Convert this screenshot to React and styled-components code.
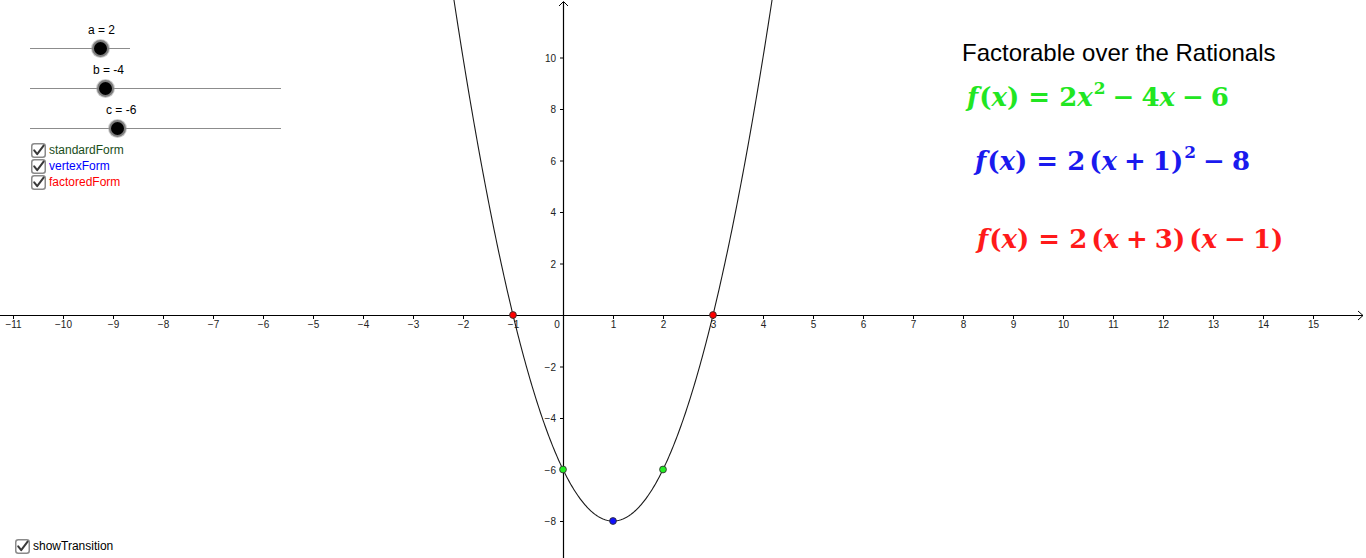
import React from "react";
import styled, { createGlobalStyle } from "styled-components";

const GlobalStyle = createGlobalStyle`
  html, body { margin: 0; padding: 0; background: #fff; }
  body { font-family: "Liberation Sans", Arial, sans-serif; }
`;

const W = 1366;
const H = 558;
const OX = 563;
const OY = 315;
const UX = 50;
const UY = 25.75;
const px = (x) => OX + x * UX;
const py = (y) => OY - y * UY;

const Canvas = styled.div`
  position: relative;
  width: ${W}px;
  height: ${H}px;
  overflow: hidden;
  background: #fff;
`;

const GraphSvg = styled.svg`
  display: block;
  width: ${W}px;
  height: ${H}px;
`;

const TickText = styled.text`
  font-family: "Liberation Sans", Arial, sans-serif;
  font-size: 10px;
  fill: #222;
`;

const Controls = styled.div`
  position: absolute;
  left: 30px;
  top: 21px;
  display: flex;
  flex-direction: column;
`;

const SliderBlock = styled.div`
  height: 40px;
  display: flex;
  flex-direction: column;
`;

const SliderLabel = styled.div`
  height: 18px;
  line-height: 18px;
  font-size: 12px;
  color: #000;
  padding-left: ${(p) => p.$offset}px;
  white-space: nowrap;
`;

const Track = styled.div`
  position: relative;
  width: ${(p) => p.$width}px;
  height: 1px;
  margin-top: 9px;
  background: #8c8c8c;
`;

const Knob = styled.div`
  position: absolute;
  top: -8px;
  left: ${(p) => p.$pos - 8.5}px;
  width: 13px;
  height: 13px;
  border-radius: 50%;
  background: #000;
  border: 2px solid #7d7d7d;
  box-shadow: 0 0 0 1px rgba(150, 150, 150, 0.5);
`;

const CheckList = styled.div`
  display: flex;
  flex-direction: column;
  margin-top: 1px;
  margin-left: 1px;
`;

const CheckRow = styled.div`
  display: flex;
  align-items: center;
  gap: 3px;
  height: 16px;
  font-size: 12px;
  color: ${(p) => p.$color};
  white-space: nowrap;
`;

const BottomCheck = styled.div`
  position: absolute;
  left: 15px;
  top: 538px;
`;

const FormulaPanel = styled.div`
  position: absolute;
  left: 962px;
  top: 39px;
  display: flex;
  flex-direction: column;
`;

const Title = styled.div`
  font-family: "Liberation Sans", Arial, sans-serif;
  font-size: 24px;
  line-height: 28px;
  color: #000;
  white-space: nowrap;
`;

const Formula = styled.div`
  font-family: "DejaVu Serif", "Liberation Serif", serif;
  font-weight: bold;
  font-size: 26px;
  line-height: 32px;
  height: 32px;
  color: ${(p) => p.$color};
  margin-left: ${(p) => p.$left}px;
  margin-top: ${(p) => p.$top}px;
  white-space: nowrap;
  display: flex;
  align-items: baseline;
`;

const I = styled.span`
  font-style: italic;
  margin-right: ${(p) => p.$mr || 0}px;
`;

const Op = styled.span`
  margin: 0 ${(p) => p.$gap}px;
`;

const Sup = styled.sup`
  font-size: 17px;
  vertical-align: 0;
  position: relative;
  top: -12px;
  line-height: 0;
  margin-left: 1px;
`;

const Thin = styled.span`
  display: inline-block;
  width: ${(p) => p.$w}px;
`;

function CheckIcon() {
  return (
    <svg width="15" height="15" viewBox="0 0 15 15">
      <rect x="0.75" y="0.75" width="13.5" height="13.5" rx="2.5" fill="#fff" stroke="#8a8a8a" strokeWidth="1.5" />
      <path d="M3.2 7.3 L6.2 11.2 L12.6 2.6" fill="none" stroke="#3a3a3a" strokeWidth="2" strokeLinecap="round" strokeLinejoin="round" />
    </svg>
  );
}

function Slider({ label, offset, width, pos }) {
  return (
    <SliderBlock>
      <SliderLabel $offset={offset}>{label}</SliderLabel>
      <Track $width={width}>
        <Knob $pos={pos} />
      </Track>
    </SliderBlock>
  );
}

function Check({ label, color }) {
  return (
    <CheckRow $color={color}>
      <CheckIcon />
      <span>{label}</span>
    </CheckRow>
  );
}

function Graph() {
  const f = (x) => 2 * x * x - 4 * x - 6;
  const pts = [];
  for (let x = -2.4; x <= 4.4; x += 0.02) {
    pts.push(`${px(x).toFixed(2)},${py(f(x)).toFixed(2)}`);
  }
  const xs = [];
  for (let i = -11; i <= 15; i++) xs.push(i);
  const ys = [10, 8, 6, 4, 2, -2, -4, -6, -8];
  const lab = (n) => (n < 0 ? `\u2212${-n}` : `${n}`);
  const points = [
    { x: -1, y: 0, c: "#ff0000" },
    { x: 3, y: 0, c: "#ff0000" },
    { x: 0, y: -6, c: "#22ee22" },
    { x: 2, y: -6, c: "#22ee22" },
    { x: 1, y: -8, c: "#1010ff" },
  ];
  return (
    <GraphSvg viewBox={`0 0 ${W} ${H}`}>
      <line x1="0" y1={OY + 0.5} x2={W - 3} y2={OY + 0.5} stroke="#000" strokeWidth="1.2" />
      <path d={`M${W - 8} ${OY - 4} L${W - 3} ${OY + 0.5} L${W - 8} ${OY + 5}`} fill="none" stroke="#000" strokeWidth="1" />
      <line x1={OX + 0.5} y1="2" x2={OX + 0.5} y2={H} stroke="#000" strokeWidth="1.2" />
      <path d={`M${OX - 4} 6 L${OX + 0.5} 1.5 L${OX + 5} 6`} fill="none" stroke="#000" strokeWidth="1" />
      {xs.map((i) =>
        i === 0 ? null : (
          <g key={`x${i}`}>
            <line x1={px(i) + 0.5} y1={OY} x2={px(i) + 0.5} y2={OY + 4} stroke="#000" strokeWidth="1" />
            <TickText x={px(i) + 0.5} y={OY + 13} textAnchor="middle">{lab(i)}</TickText>
          </g>
        )
      )}
      <TickText x={OX - 6} y={OY + 13} textAnchor="middle">0</TickText>
      {ys.map((j) => (
        <g key={`y${j}`}>
          <line x1={OX - 3} y1={py(j) + 0.5} x2={OX} y2={py(j) + 0.5} stroke="#000" strokeWidth="1" />
          <TickText x={OX - 7} y={py(j) + 4} textAnchor="end">{lab(j)}</TickText>
        </g>
      ))}
      <polyline points={pts.join(" ")} fill="none" stroke="#1a1a1a" strokeWidth="1.1" />
      {points.map((p, k) => (
        <circle key={k} cx={px(p.x)} cy={py(p.y)} r="3.4" fill={p.c} stroke="#333" strokeWidth="0.9" />
      ))}
    </GraphSvg>
  );
}

export default function App() {
  return (
    <>
      <GlobalStyle />
      <Canvas>
        <Graph />
        <Controls>
          <Slider label="a = 2" offset={58} width={100} pos={70} />
          <Slider label="b = -4" offset={63} width={251} pos={75} />
          <Slider label="c = -6" offset={76} width={251} pos={87} />
          <CheckList>
            <Check label="standardForm" color="#1a4d1a" />
            <Check label="vertexForm" color="#0000ff" />
            <Check label="factoredForm" color="#ff0000" />
          </CheckList>
        </Controls>
        <BottomCheck>
          <Check label="showTransition" color="#000" />
        </BottomCheck>
        <FormulaPanel>
          <Title>Factorable over the Rationals</Title>
          <Formula $color="#22e622" $left={5} $top={14}>
            <I $mr={1}>f</I>(<I>x</I>)
            <Op $gap={9}>=</Op>2<I>x</I><Sup>2</Sup>
            <Op $gap={7}>−</Op>4<I>x</I>
            <Op $gap={7}>−</Op>6
          </Formula>
          <Formula $color="#1a1aee" $left={13} $top={32}>
            <I $mr={1}>f</I>(<I>x</I>)
            <Op $gap={9}>=</Op>2<Thin $w={4} />(<I>x</I>
            <Op $gap={7}>+</Op>1)<Sup>2</Sup>
            <Op $gap={7}>−</Op>8
          </Formula>
          <Formula $color="#ff1a1a" $left={15} $top={46}>
            <I $mr={1}>f</I>(<I>x</I>)
            <Op $gap={9}>=</Op>2<Thin $w={4} />(<I>x</I>
            <Op $gap={7}>+</Op>3)<Thin $w={4} />(<I>x</I>
            <Op $gap={7}>−</Op>1)
          </Formula>
        </FormulaPanel>
      </Canvas>
    </>
  );
}
